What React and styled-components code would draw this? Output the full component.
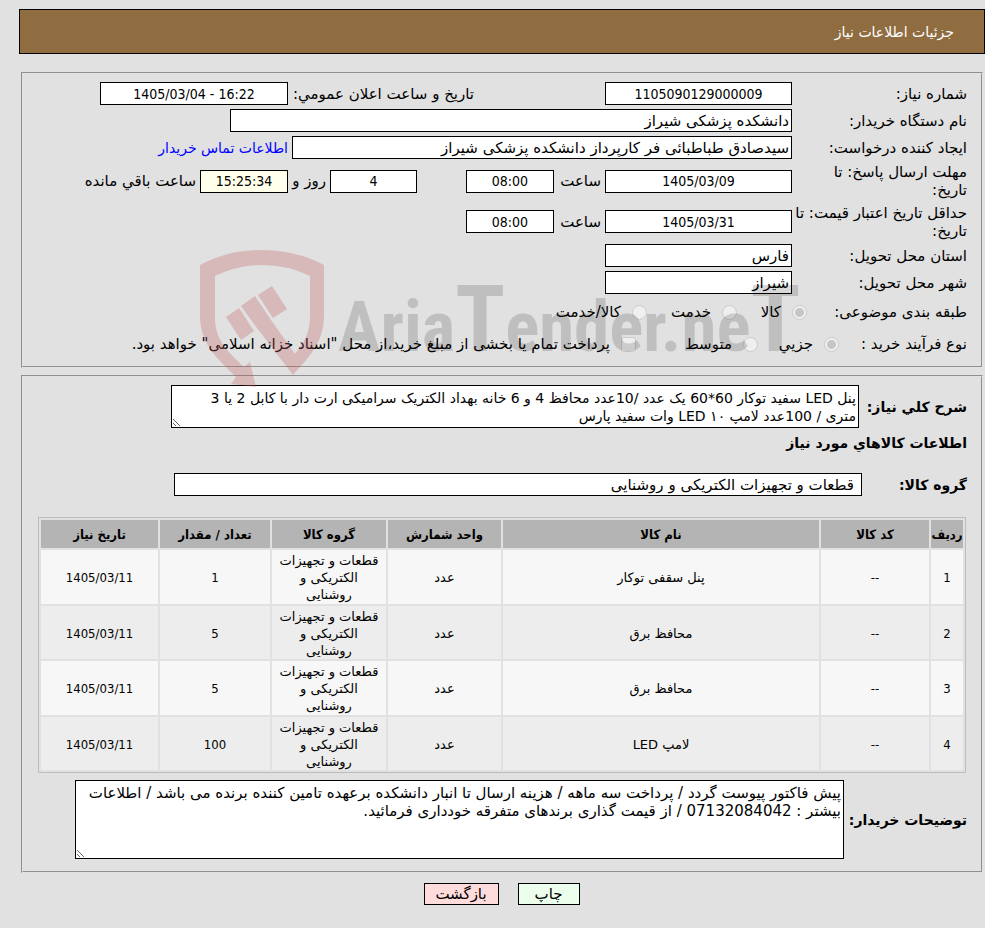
import React from "react";
import styled, { createGlobalStyle } from "styled-components";

const GlobalStyle = createGlobalStyle`
  *, *::before, *::after { box-sizing: border-box; }
  body { margin: 0; background: #e1e1e1; }
  body, input, textarea, button {
    font-family: "DejaVu Sans", sans-serif;
    font-size: 15px;
    color: #000;
  }
`;

const numeric = `"DejaVu Sans Condensed", "DejaVu Sans", sans-serif`;

const Page = styled.div`
  position: relative;
  direction: rtl;
  padding: 9px 0 23px 19px;
`;

const TitleBar = styled.header`
  display: flex;
  align-items: center;
  height: 45px;
  padding: 0 30px;
  border: 1px solid #000;
  background: #8f6d40;
`;

const Title = styled.h1`
  margin: 0;
  font-size: 14px;
  font-weight: 400;
  color: #fff;
`;

const Panel = styled.section`
  display: flex;
  flex-direction: column;
  gap: 4px;
  margin: ${(p) => p.$top}px 2px 0 2px;
  padding: 8px 14px ${(p) => p.$bottom}px 15px;
  border: 2px groove #e3e3e3;
`;

const Row = styled.div`
  display: flex;
  align-items: center;
  min-height: ${(p) => p.$h || 23}px;
`;

const Caption = styled.label`
  flex: none;
  width: ${(p) => p.$w || 175}px;
  line-height: 18px;
  font-size: ${(p) => (p.$bold ? 14 : 15)}px;
  font-weight: ${(p) => (p.$bold ? 700 : 400)};
  white-space: nowrap;
`;

const Inline = styled.label`
  flex: none;
  width: ${(p) => p.$w}px;
  padding: 0 4px;
  white-space: nowrap;
`;

const Field = styled.input`
  flex: 0 1 ${(p) => p.$w}px;
  min-width: 0;
  width: ${(p) => p.$w}px;
  height: 23px;
  margin: 0;
  padding: 1px ${(p) => p.$pad || 2}px;
  border: 1px solid #000;
  border-radius: 0;
  background: #fff;
  text-align: right;
`;

const NumberField = styled(Field).attrs({ dir: "ltr", readOnly: true })`
  background: ${(p) => p.$bg || "#fff"};
  font-family: ${numeric};
  font-size: 14px;
  text-align: center;
`;

const Gap = styled.div`
  flex: 0 1 ${(p) => p.$w}px;
`;

const ContactLink = styled.a`
  padding: 0 4px;
  font-size: 14px;
  color: #00f;
  text-decoration: none;
  white-space: nowrap;
`;

const Option = styled.label`
  display: flex;
  flex: none;
  align-items: center;
  gap: 11px;
  width: ${(p) => p.$w}px;
  white-space: nowrap;
`;

const Tick = styled.input`
  flex: none;
  appearance: none;
  width: 15px;
  height: 15px;
  margin: 0;
  border: 1px solid #cbcbcb;
  border-radius: ${(p) => (p.type === "radio" ? "50%" : "3px")};
  background: #efefef;
  &:checked { background: radial-gradient(circle, #c6c6c6 4px, #efefef 5px); }
`;

const Memo = styled.textarea`
  flex: 0 1 ${(p) => p.$w}px;
  min-width: 0;
  height: ${(p) => p.$h}px;
  margin: 0;
  padding: 3px 2px;
  border: 1px solid #000;
  border-radius: 0;
  background: #fff;
  font-size: ${(p) => p.$size}px;
  line-height: 18px;
  overflow: hidden;
`;

const Heading = styled.h2`
  margin: 0;
  padding: 2px 0 17px;
  font-size: 14px;
  line-height: 18px;
`;

const Goods = styled.table`
  table-layout: fixed;
  width: calc(100% - 1px);
  height: 256px;
  margin: 17px 1px 3px 0;
  border: 1px solid #bdbdbd;
  border-collapse: separate;
  border-spacing: 2px;
  font-size: 13px;
  line-height: 17px;
  text-align: center;
`;

const HeadCell = styled.th`
  width: ${(p) => p.$w};
  height: 28px;
  padding: 0;
  background: #b4b4b4;
  font-family: ${numeric};
  font-size: 13px;
  white-space: nowrap;
`;

const GoodsRow = styled.tr`
  background: #ededed;
  &:nth-child(odd) { background: #f7f7f7; }
`;

const Cell = styled.td`
  padding: 2px 6px 0;
`;

const NumberCell = styled(Cell)`
  font-family: ${numeric};
`;

const Actions = styled.div`
  display: flex;
  justify-content: center;
  gap: 19px;
  margin: 10px 3px 0 2px;
`;

const Action = styled.button`
  width: ${(p) => p.$w}px;
  height: 22px;
  padding: 0;
  border: 1px solid #000;
  border-radius: 0;
  background: ${(p) => p.$bg};
`;

const Watermark = styled.svg`
  position: absolute;
  top: 245px;
  left: 195px;
  pointer-events: none;
  direction: ltr;
  font-family: "Roboto Condensed", "Open Sans Condensed", "Liberation Sans", sans-serif;
  font-weight: 700;
`;

const columns = [
  ["ردیف", "32px"],
  ["کد کالا", "108px"],
  ["نام کالا", "auto"],
  ["واحد شمارش", "113px"],
  ["گروه کالا", "114px"],
  ["تعداد / مقدار", "110px"],
  ["تاریخ نیاز", "117px"],
];

const group = "قطعات و تجهیزات الکتریکی و روشنایی";
const goods = [
  ["1", "پنل سقفی توکار", "1"],
  ["2", "محافظ برق", "5"],
  ["3", "محافظ برق", "5"],
  ["4", "لامپ LED", "100"],
];

const summary =
  "پنل LED سفید توکار 60*60 یک عدد /10عدد محافظ 4 و 6 خانه بهداد الکتریک سرامیکی ارت دار با کابل 2 یا 3\nمتری / 100عدد لامپ ۱۰ LED وات سفید پارس";
const notes =
  "پیش فاکتور پیوست گردد / پرداخت سه ماهه / هزینه ارسال تا انبار دانشکده برعهده تامین کننده برنده می باشد / اطلاعات\nبیشتر : 07132084042 / از قیمت گذاری برندهای متفرقه خودداری فرمائید.";

function Brand() {
  return (
    <Watermark width="610" height="145" viewBox="195 245 610 145" aria-hidden="true">
      <g fill="rgba(192,92,92,0.3)">
        <path d="M200 265Q228 250 262 250Q296 250 324 265V315C324 343 308 358 293 375L257 328L241 306L255 296L271 320L295 354C304 342 310 334 310 315V276Q288 265 262 265Q237 265 215 276V318C215 340 228 352 244 367L250 362L256 387L231 384L236 377C216 357 200 344 200 315Z" />
        <path d="M272 286L287 309L273 318L258 295Z" />
        <path d="M239 308L254 331L241 340L226 317Z" />
      </g>
      <text x="338" y="351" fontSize="71" fill="rgba(0,0,0,0.15)">
        Aria<tspan fontSize="92">T</tspan>ender.ne<tspan fontSize="92">T</tspan>
      </text>
    </Watermark>
  );
}

export default function App() {
  return (
    <>
      <GlobalStyle />
      <Page>
        <TitleBar>
          <Title>جزئیات اطلاعات نیاز</Title>
        </TitleBar>

        <Panel $top={18} $bottom={8}>
          <Row>
            <Caption htmlFor="number">شماره نیاز:</Caption>
            <NumberField id="number" $w={187} defaultValue="1105090129000009" />
            <Gap $w={127} />
            <Inline htmlFor="announced" $w={190}>تاریخ و ساعت اعلان عمومي:</Inline>
            <NumberField id="announced" $w={188} defaultValue="1405/03/04 - 16:22" />
          </Row>
          <Row>
            <Caption htmlFor="buyer">نام دستگاه خریدار:</Caption>
            <Field id="buyer" $w={562} readOnly defaultValue="دانشکده پزشکی شیراز" />
          </Row>
          <Row>
            <Caption htmlFor="creator">ایجاد کننده درخواست:</Caption>
            <Field id="creator" $w={500} readOnly defaultValue="سیدصادق طباطبائی فر کارپرداز دانشکده پزشکی شیراز" />
            <ContactLink href="#contact">اطلاعات تماس خریدار</ContactLink>
          </Row>
          <Row $h={36}>
            <Caption htmlFor="deadline">مهلت ارسال پاسخ: تا<br />تاریخ:</Caption>
            <NumberField id="deadline" $w={187} defaultValue="1405/03/09" />
            <Inline htmlFor="deadlineHour" $w={51}>ساعت</Inline>
            <NumberField id="deadlineHour" $w={88} defaultValue="08:00" />
            <Gap $w={49} />
            <NumberField id="days" $w={87} defaultValue="4" />
            <Inline htmlFor="days" $w={42}>روز و</Inline>
            <NumberField id="remaining" $w={88} $bg="#ffffec" defaultValue="15:25:34" />
            <Inline htmlFor="remaining" $w={120}>ساعت باقي مانده</Inline>
          </Row>
          <Row $h={37}>
            <Caption htmlFor="validity">حداقل تاریخ اعتبار قیمت: تا<br />تاریخ:</Caption>
            <NumberField id="validity" $w={187} defaultValue="1405/03/31" />
            <Inline htmlFor="validityHour" $w={51}>ساعت</Inline>
            <NumberField id="validityHour" $w={88} defaultValue="08:00" />
          </Row>
          <Row>
            <Caption htmlFor="province">استان محل تحویل:</Caption>
            <Field id="province" $w={187} readOnly defaultValue="فارس" />
          </Row>
          <Row>
            <Caption htmlFor="city">شهر محل تحویل:</Caption>
            <Field id="city" $w={187} readOnly defaultValue="شیراز" />
          </Row>
          <Row $h={28} role="radiogroup" aria-labelledby="subject">
            <Caption as="span" id="subject" $w={160}>طبقه بندی موضوعی:</Caption>
            <Option $w={70}><Tick type="radio" name="subject" disabled defaultChecked />کالا</Option>
            <Option $w={90}><Tick type="radio" name="subject" disabled />خدمت</Option>
            <Option $w={100}><Tick type="radio" name="subject" disabled />کالا/خدمت</Option>
          </Row>
          <Row $h={28} role="group" aria-labelledby="process">
            <Caption as="span" id="process" $w={128}>نوع فرآیند خرید :</Caption>
            <Option $w={81}><Tick type="radio" name="process" disabled defaultChecked />جزیي</Option>
            <Option $w={122}><Tick type="radio" name="process" disabled />متوسط</Option>
            <Option $w={520}><Tick type="checkbox" disabled />پرداخت تمام یا بخشی از مبلغ خرید،از محل "اسناد خزانه اسلامی" خواهد بود.</Option>
          </Row>
        </Panel>

        <Panel $top={7} $bottom={12}>
          <Row>
            <Caption htmlFor="summary" $bold $w={108}>شرح کلي نیاز:</Caption>
            <Memo id="summary" $w={688} $h={43} $size={14} readOnly defaultValue={summary} />
          </Row>
          <Heading>اطلاعات کالاهاي مورد نیاز</Heading>
          <Row>
            <Caption htmlFor="group" $bold $w={105}>گروه کالا:</Caption>
            <Field id="group" $w={688} $pad={7} readOnly defaultValue={group} />
          </Row>
          <Goods>
            <thead>
              <tr>
                {columns.map(([name, w]) => (
                  <HeadCell key={name} $w={w} scope="col">{name}</HeadCell>
                ))}
              </tr>
            </thead>
            <tbody>
              {goods.map(([no, name, count]) => (
                <GoodsRow key={no}>
                  <NumberCell>{no}</NumberCell>
                  <NumberCell>--</NumberCell>
                  <Cell>{name}</Cell>
                  <Cell>عدد</Cell>
                  <Cell>{group}</Cell>
                  <NumberCell>{count}</NumberCell>
                  <NumberCell>1405/03/11</NumberCell>
                </GoodsRow>
              ))}
            </tbody>
          </Goods>
          <Row>
            <Caption htmlFor="notes" $bold $w={123}>توضیحات خریدار:</Caption>
            <Memo id="notes" $w={769} $h={79} $size={15} readOnly defaultValue={notes} />
          </Row>
        </Panel>

        <Actions>
          <Action type="button" $w={62} $bg="#ecffec">چاپ</Action>
          <Action type="button" $w={75} $bg="#ffdcdc">بازگشت</Action>
        </Actions>
        <Brand />
      </Page>
    </>
  );
}
